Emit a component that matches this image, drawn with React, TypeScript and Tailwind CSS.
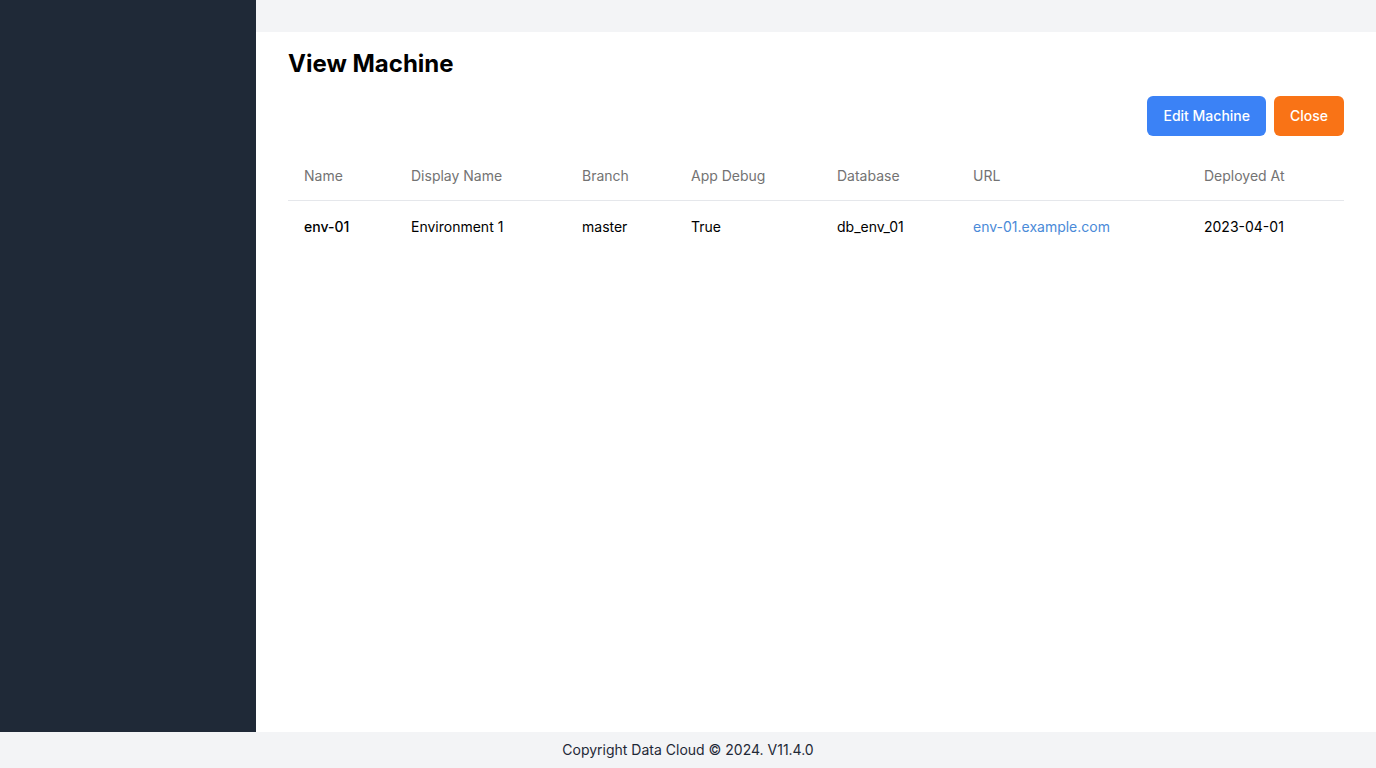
import React from "react";

const machine = {
  name: "env-01",
  displayName: "Environment 1",
  branch: "master",
  appDebug: "True",
  database: "db_env_01",
  url: "env-01.example.com",
  deployedAt: "2023-04-01",
};

const columns = [
  { label: "Name", w: "w-[107px]" },
  { label: "Display Name", w: "w-[171px]" },
  { label: "Branch", w: "w-[109px]" },
  { label: "App Debug", w: "w-[146px]" },
  { label: "Database", w: "w-[136px]" },
  { label: "URL", w: "w-[231px]" },
  { label: "Deployed At", w: "w-[156px]" },
];

export default function App() {
  return (
    <div className="flex flex-col h-screen font-['Inter',sans-serif] text-[#111827]">
      <div className="flex flex-1 min-h-0">
        <aside className="w-64 shrink-0 bg-[#1f2937]"></aside>
        <div className="flex flex-col flex-1 bg-[#f3f4f6]">
          <header className="h-8 shrink-0"></header>
          <main className="flex-1 bg-white px-8 pt-4">
            <h1 className="text-2xl font-bold text-black leading-8">View Machine</h1>
            <div className="flex justify-end gap-2 mt-4">
              <button className="h-10 px-4 rounded-md bg-[#3b82f6] text-white text-sm font-medium">
                Edit Machine
              </button>
              <button className="h-10 px-4 rounded-md bg-[#f97316] text-white text-sm font-medium">
                Close
              </button>
            </div>
            <table className="w-full mt-4 text-sm text-left table-fixed">
              <thead>
                <tr className="border-b border-[#e5e7eb]">
                  {columns.map((c) => (
                    <th key={c.label} className={`${c.w} px-4 h-12 font-normal text-[#737373]`}>
                      {c.label}
                    </th>
                  ))}
                </tr>
              </thead>
              <tbody>
                <tr>
                  <td className="px-4 h-[54px] font-medium text-black">{machine.name}</td>
                  <td className="px-4 text-black">{machine.displayName}</td>
                  <td className="px-4 text-black">{machine.branch}</td>
                  <td className="px-4 text-black">{machine.appDebug}</td>
                  <td className="px-4 text-black">{machine.database}</td>
                  <td className="px-4">
                    <a href="#" className="text-[#4a8ad8]">{machine.url}</a>
                  </td>
                  <td className="px-4 text-black">{machine.deployedAt}</td>
                </tr>
              </tbody>
            </table>
          </main>
        </div>
      </div>
      <footer className="h-9 shrink-0 bg-[#f3f4f6] flex items-center justify-center text-sm text-[#1f2937]">
        Copyright Data Cloud © 2024. V11.4.0
      </footer>
    </div>
  );
}
